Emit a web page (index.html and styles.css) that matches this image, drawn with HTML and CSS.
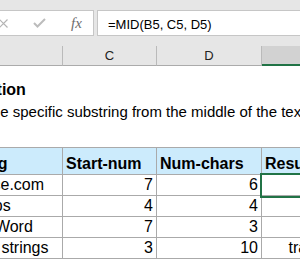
FILE: index.html
```html
<!DOCTYPE html>
<html lang="en">
<head>
    <meta charset="UTF-8">
    <meta name="viewport" content="width=device-width, initial-scale=1.0">
    <title>MID function</title>
    <link rel="stylesheet" href="styles.css">
</head>
<body>
    <!-- Formula bar -->
    <div class="formula-bar">
        <div class="fx-box">
            <svg class="icon-cancel" width="9" height="9" viewBox="0 0 9 9">
                <path d="M0.5 0.5L8.5 8.5M8.5 0.5L0.5 8.5" stroke="#b4b4b4" stroke-width="1.2" fill="none"/>
            </svg>
            <svg class="icon-enter" width="13" height="10" viewBox="0 0 13 10">
                <path d="M1 5L4.5 8.5L12 1" stroke="#bcbcbc" stroke-width="2" fill="none"/>
            </svg>
            <span class="icon-fx">fx</span>
        </div>
        <div class="formula-input">=MID(B5, C5, D5)</div>
    </div>

    <!-- Column letters -->
    <div class="col-headers">
        <div class="col-head">B</div>
        <div class="col-head">C</div>
        <div class="col-head">D</div>
        <div class="col-head active">E</div>
    </div>

    <!-- Sheet -->
    <div class="sheet">
        <p class="title">MID function</p>
        <p class="desc">Returns the specific substring from the middle of the text string.</p>

        <div class="grid">
            <div class="cell head text">String</div>
            <div class="cell head">Start-num</div>
            <div class="cell head">Num-chars</div>
            <div class="cell head">Result</div>

            <div class="cell text">www.choice.com</div>
            <div class="cell num">7</div>
            <div class="cell num">6</div>
            <div class="cell selected"></div>

            <div class="cell text">Groups</div>
            <div class="cell num">4</div>
            <div class="cell num">4</div>
            <div class="cell"></div>

            <div class="cell text">Excel &amp; Word</div>
            <div class="cell num">7</div>
            <div class="cell num">3</div>
            <div class="cell"></div>

            <div class="cell text">Extract the strings</div>
            <div class="cell num">3</div>
            <div class="cell num">10</div>
            <div class="cell result">tract the</div>
        </div>
    </div>
</body>
</html>
```

FILE: styles.css
```css
body {
    margin: 0;
    background-color: #fff;
    font-family: "Liberation Sans", Arial, sans-serif;
    color: #000;
    overflow: hidden;
}
.formula-bar {
    display: flex;
    gap: 3px;
    height: 36px;
    padding-top: 10px;
    box-sizing: border-box;
    background-color: #e6e6e6;
}
.fx-box {
    display: flex;
    align-items: center;
    gap: 25px;
    width: 114px;
    height: 26px;
    margin-left: -20px;
    padding-left: 18px;
    box-sizing: border-box;
    background-color: #fff;
    border: 1px solid #c6c6c6;
}
.icon-fx {
    font-family: "Liberation Serif", "Times New Roman", serif;
    font-style: italic;
    font-size: 15px;
    color: #6d6d6d;
}
.formula-input {
    flex: 1;
    height: 26px;
    margin-right: -10px;
    padding: 6px 0 0 10px;
    box-sizing: border-box;
    background-color: #fff;
    border: 1px solid #c6c6c6;
    font-size: 13px;
    line-height: 15px;
    white-space: nowrap;
}
.col-headers {
    display: grid;
    grid-template-columns: 156px 94px 105px 112px;
    margin-left: -93px;
    padding-top: 10px;
    background-color: #e6e6e6;
}
.col-head {
    height: 20px;
    box-sizing: border-box;
    border-right: 1px solid #bababa;
    border-bottom: 1px solid #ababab;
    text-align: center;
    font-size: 13px;
    line-height: 19px;
    color: #222;
}
.col-head.active {
    background-color: #d2d2d2;
    border-bottom: 2px solid #217346;
}
.sheet {
    padding-top: 13px;
}
.title,
.desc {
    margin: 0;
    line-height: 21px;
    white-space: nowrap;
}
.title {
    margin-left: -71px;
    font-size: 16px;
    font-weight: bold;
}
.desc {
    margin: 1px 0 0 -69px;
    font-size: 15px;
}
.grid {
    display: grid;
    grid-template-columns: 156px 94px 105px 112px;
    margin-top: 25px;
    margin-left: -93px;
    border-top: 1px solid #aaa;
}
.cell {
    display: flex;
    align-items: flex-end;
    height: 21px;
    padding: 0 3px;
    box-sizing: border-box;
    border-right: 1px solid #aaa;
    border-bottom: 1px solid #aaa;
    font-size: 16px;
    line-height: 20px;
    white-space: nowrap;
}
.cell.head {
    height: 27px;
    background-color: #ccebfc;
    font-weight: bold;
}
.cell.text,
.cell.result {
    justify-content: center;
}
.cell.num {
    justify-content: flex-end;
}
.cell.selected {
    position: relative;
    z-index: 1;
    outline: 2px solid #217346;
}
```
